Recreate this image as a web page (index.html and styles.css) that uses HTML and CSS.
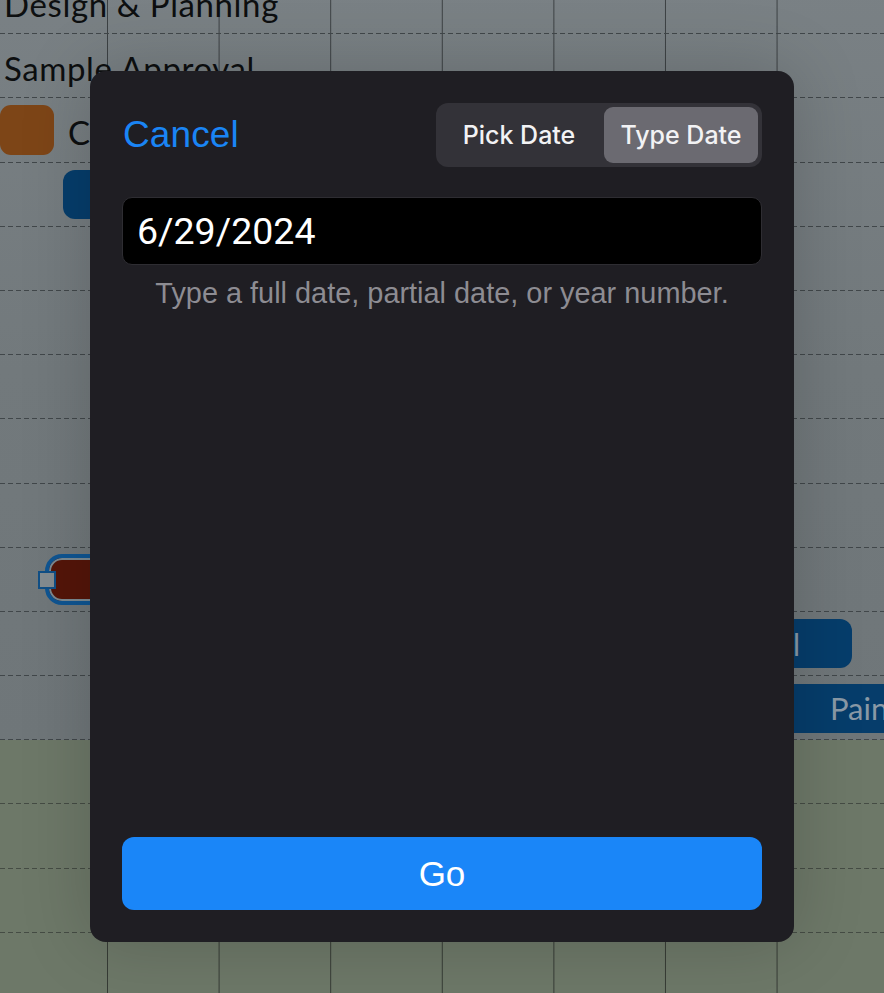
FILE: index.html
```html
<!DOCTYPE html>
<html>
<head>
<meta charset="utf-8">
<link rel="stylesheet" href="styles.css">
</head>
<body>
<div class="screen">
  <div class="chart">
    <div class="row"><span class="label">Design &amp; Planning</span></div>
    <div class="row"><span class="label">Sample Approval</span></div>
    <div class="row"><span class="swatch"></span><span class="label">Cutting</span></div>
    <div class="row"><span class="bar bar-a"></span></div>
    <div class="row"></div>
    <div class="row"></div>
    <div class="row"></div>
    <div class="row"></div>
    <div class="row"></div>
    <div class="row"><span class="sel"><span class="handle"></span></span></div>
    <div class="row"><span class="bar bar-b">Final</span></div>
    <div class="row"><span class="bar bar-c">Painting</span></div>
    <div class="row green"></div>
    <div class="row green"></div>
    <div class="row green"></div>
    <div class="row green"></div>
  </div>

  <div class="modal">
    <div class="modal-head">
      <span class="cancel">Cancel</span>
      <div class="seg">
        <span class="seg-item">Pick Date</span>
        <span class="seg-item active">Type Date</span>
      </div>
    </div>
    <div class="field">6/29/2024</div>
    <p class="hint">Type a full date, partial date, or year number.</p>
    <div class="spacer"></div>
    <div class="go">Go</div>
  </div>
</div>
</body>
</html>
```

FILE: styles.css
```css
* { box-sizing: border-box; }
html, body { margin: 0; padding: 0; }
body {
  width: 884px;
  height: 993px;
  overflow: hidden;
  background: #70777a;
  font-family: "Liberation Sans", Arial, sans-serif;
}
.screen {
  position: relative;
  width: 884px;
  height: 993px;
  overflow: hidden;
}
.chart {
  margin-top: -30px;
  background-color: #72797c;
  background-image:
    linear-gradient(to right, rgba(40,44,46,0.75) 1px, transparent 1px),
    linear-gradient(to bottom, #7a8185 0, #72797c 400px, #6f7679 770px);
  background-size: 111.6px 100%, 100% 100%;
  background-position: 107px 0, 0 0;
}
.row {
  position: relative;
  height: 64.2px;
  display: flex;
  align-items: center;
  background-image: repeating-linear-gradient(to right, #41474a 0 5px, transparent 5px 8px);
  background-size: 100% 1px;
  background-position: 0 100%;
  background-repeat: no-repeat;
}
.row.green {
  background-color: #6d7868;
  background-image:
    repeating-linear-gradient(to right, #454c44 0 5px, transparent 5px 8px),
    linear-gradient(to right, rgba(40,44,40,0.8) 1px, transparent 1px);
  background-size: 100% 1px, 111.6px 100%;
  background-position: 0 100%, 107px 0;
  background-repeat: no-repeat, repeat;
}
.label {
  font-family: "Lato", "Open Sans", sans-serif;
  font-size: 33px;
  letter-spacing: 0.6px;
  color: #0d0f10;
  padding-left: 4px;
  padding-top: 4px;
}
.swatch {
  width: 54px;
  height: 50px;
  border-radius: 11px;
  background: #7d4517;
  margin-right: 10px;
}
.swatch + .label { padding-left: 4px; }
.bar {
  height: 49px;
  border-radius: 12px;
  background: #063d6b;
}
.bar-a { margin-left: 63px; width: 200px; }
.bar-b {
  margin-left: 560px;
  width: 292px;
  color: #8a99a6;
  font-family: "Lato", sans-serif;
  font-size: 30px;
  display: flex;
  align-items: center;
  justify-content: flex-end;
  padding-right: 52px;
}
.bar-c {
  margin-left: 600px;
  flex: 1;
  border-radius: 0;
  color: #8a99a6;
  font-family: "Lato", sans-serif;
  font-size: 31px;
  display: flex;
  align-items: center;
  padding-left: 230px;
}
.sel {
  position: relative;
  margin-left: 45px;
  width: 200px;
  height: 51px;
  border-radius: 17px;
  background: #541509;
  border: 4px solid #0f5592;
  box-shadow: inset 0 0 0 2px #7b8a92;
}
.handle {
  position: absolute;
  left: -11px;
  top: 13px;
  width: 18px;
  height: 18px;
  background: #858c90;
  border: 2px solid #114f86;
}

.modal {
  position: absolute;
  left: 90px;
  top: 71px;
  width: 704px;
  height: 871px;
  background: #1f1e23;
  border-radius: 16px;
  padding: 32px;
  display: flex;
  flex-direction: column;
  box-shadow: 0 0 70px rgba(0,0,0,0.18);
}
.modal-head {
  display: flex;
  justify-content: space-between;
  align-items: center;
  height: 64px;
  padding-left: 1px;
}
.cancel {
  color: #1a85f5;
  font-size: 37px;
  letter-spacing: 0.1px;
}
.seg {
  display: flex;
  width: 326px;
  height: 64px;
  padding: 4px;
  background: #333238;
  border-radius: 12px;
}
.seg-item {
  flex: 1;
  display: flex;
  align-items: center;
  justify-content: center;
  color: #f2f2f4;
  font-family: "Inter", "Roboto", sans-serif;
  font-size: 25px;
  font-weight: 500;
  border-radius: 9px;
}
.seg-item:first-child { padding-right: 6px; }
.seg-item.active {
  background: #6b6a71;
  flex: 0 0 154px;
}
.field {
  margin-top: 30px;
  height: 68px;
  background: #000;
  border: 1px solid #2e2d32;
  border-radius: 10px;
  color: #fff;
  font-family: "Roboto", "Liberation Sans", sans-serif;
  font-size: 37.5px;
  display: flex;
  align-items: center;
  padding-left: 14px;
}
.hint {
  margin: 12px 0 0;
  text-align: center;
  color: #8d8c92;
  font-size: 28.9px;
}
.spacer { flex: 1; }
.go {
  height: 73px;
  background: #1a86f8;
  border-radius: 12px;
  color: #fff;
  font-size: 35px;
  display: flex;
  align-items: center;
  justify-content: center;
}
```
